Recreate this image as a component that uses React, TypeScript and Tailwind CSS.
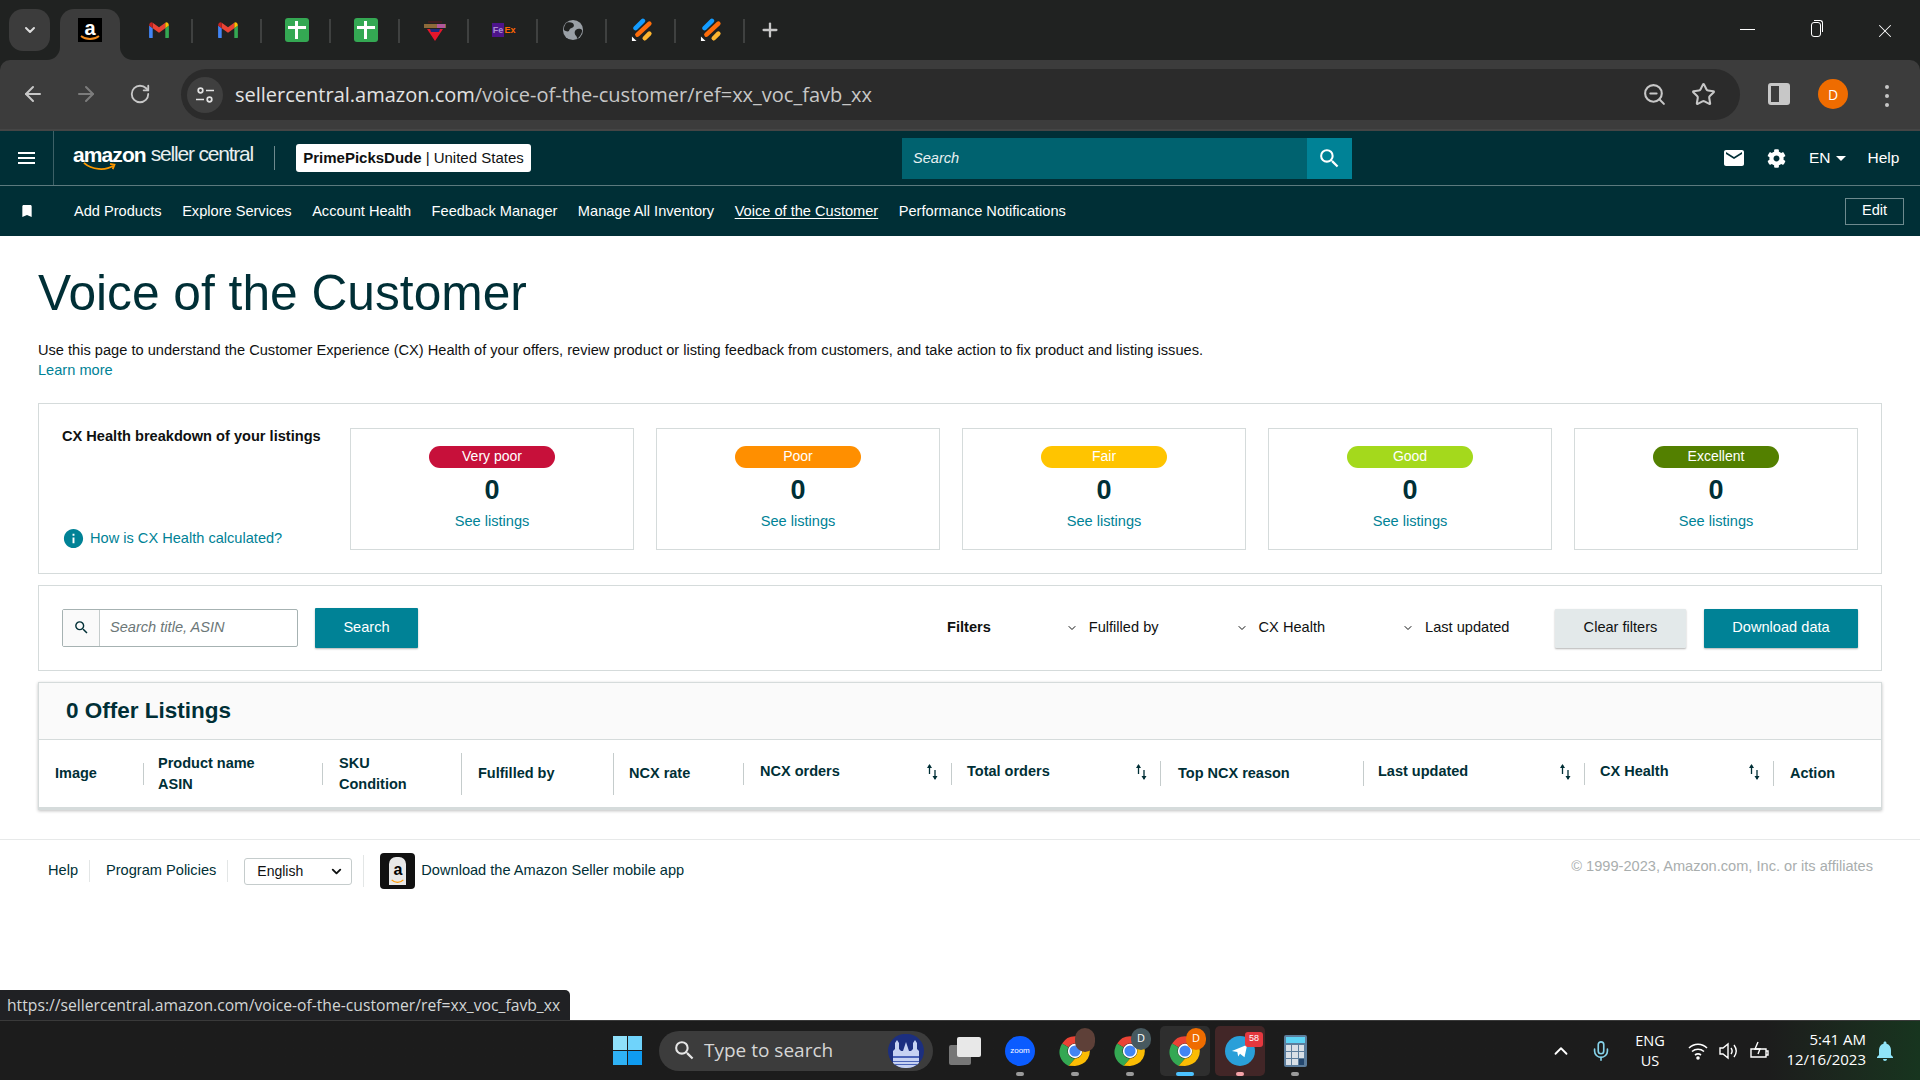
import React from "react";
import { ArrowLeft, ArrowRight, ChevronDown, ChevronUp, Mic, Plus, RotateCw, Star, X, ZoomOut } from "lucide-react";
import { FaCog } from "react-icons/fa";
import { MdBookmark, MdInfo, MdMail, MdNotifications, MdSearch } from "react-icons/md";

const Gmail = () => (
  <svg viewBox="0 0 24 20" className="w-[22px] h-[18px]">
    <path d="M1 5v13a1 1 0 0 0 1 1h3V8z" fill="#4285f4" />
    <path d="M23 5v13a1 1 0 0 1-1 1h-3V8z" fill="#34a853" />
    <path d="M5 8l7 5 7-5V2l-7 5-7-5z" fill="#ea4335" />
    <path d="M1 5c0-3 3-4.500 4-3v6z" fill="#c5221f" />
    <path d="M23 5c0-3-3-4.500-4-3v6z" fill="#fbbc04" />
  </svg>
);

const SheetIcon = () => (
  <div className="relative w-6 h-6 rounded-[3px] bg-[#34a853]">
    <div className="absolute left-[3px] right-[3px] top-[8px] h-[3px] bg-white" />
    <div className="absolute left-[10px] top-[3px] bottom-[3px] w-[3px] bg-white" />
  </div>
);

const AmazonFav = () => (
  <div className="relative w-6 h-6 bg-black flex justify-center">
    <span className="text-white font-bold text-[20px] leading-[20px] font-['Liberation_Sans',sans-serif]">a</span>
    <svg viewBox="0 0 24 24" className="absolute inset-0">
      <path d="M3 18c5 4 13 4 18 0" stroke="#f08a1d" strokeWidth="1.800" fill="none" />
    </svg>
  </div>
);

const Dart = () => (
  <svg viewBox="0 0 24 24" className="w-6 h-6">
    <path d="M5 4h14" stroke="#5b1621" strokeWidth="1" />
    <rect x="1" y="6" width="22" height="4" fill="#8d6a3a" />
    <rect x="14" y="6" width="8" height="4" fill="#b0579a" />
    <path d="M4 11h16l-8 12z" fill="#e5162c" />
    <path d="M7 11h10l-1 3H8z" fill="#1f2a7a" />
  </svg>
);

const Fedex = () => (
  <div className="flex w-6 h-[14px] text-[9px] font-bold leading-[14px] font-['Liberation_Sans',sans-serif]">
    <span className="bg-[#4d148c] text-[#a98fd0] w-[13px] text-center">Fe</span>
    <span className="text-[#ff6600]">Ex</span>
  </div>
);

const Globe = () => (
  <svg viewBox="0 0 24 24" className="w-[22px] h-[22px]">
    <circle cx="12" cy="12" r="11" fill="#9aa0a6" />
    <path d="M5 4c4-1 8 0 8 3s-4 2-5 5-4 1-6 0c0-3 1-6 3-8zM22 12c-2-2-5-2-7 0s-1 5 0 6 2 3 1 4c3-2 6-6 6-10z" fill="#202221" />
  </svg>
);

const Bars = () => (
  <svg viewBox="0 0 24 24" className="w-[22px] h-6">
    <path d="M1 24v-5l5 5z" fill="#fff" />
    <path d="M5 10L13 2" stroke="#139cff" strokeWidth="5" strokeLinecap="round" />
    <path d="M7 17L20 5" stroke="#ff6d0a" strokeWidth="5" strokeLinecap="round" />
    <path d="M15 21l5-5" stroke="#fdb62f" strokeWidth="5" strokeLinecap="round" />
  </svg>
);

const tabs = [<Gmail />, <Gmail />, <SheetIcon />, <SheetIcon />, <Dart />, <Fedex />, <Globe />, <Bars />, <Bars />];

const TabStrip = () => (
  <div className="flex h-[60px] shrink-0 bg-[#202221] pt-[9px]">
    <div className="ml-[9px] w-[41px] h-[42px] rounded-[14px] bg-[#3c3c3c] flex items-center justify-center">
      <ChevronDown size={16} strokeWidth={3} className="text-[#dddddd]" />
    </div>
    <div className="relative ml-[10px] w-[60px] h-[51px] bg-[#3c3c3c] rounded-t-[14px] flex justify-center pt-[9px]">
      <AmazonFav />
      {/* concave flares at the foot of the active tab */}
      <div className="absolute bottom-0 -left-[13px] w-[13px] h-[13px] bg-[#3c3c3c]">
        <div className="w-full h-full bg-[#202221] rounded-br-[13px]" />
      </div>
      <div className="absolute bottom-0 -right-[13px] w-[13px] h-[13px] bg-[#3c3c3c]">
        <div className="w-full h-full bg-[#202221] rounded-bl-[13px]" />
      </div>
    </div>
    {/* tab slots are 69px wide with a divider on the right edge */}
    <div className="ml-[4px] flex">
      {tabs.map((icon, i) => (
        <div key={i} className="w-[69px] h-[42px] relative flex items-center justify-center">
          {icon}
          <div className="absolute right-0 top-[10px] w-[2px] h-[24px] bg-[#3f4140]" />
        </div>
      ))}
    </div>
    <div className="w-[50px] h-[42px] flex items-center justify-center">
      <Plus size={22} strokeWidth={2.500} className="text-[#c7c7c7]" />
    </div>
    <div className="ml-auto flex h-[42px] items-start pt-[2px] text-white">
      <div className="w-[67px] flex justify-center pt-[18px]"><div className="w-[15px] h-px bg-white" /></div>
      <div className="w-[69px] flex justify-center pt-[11px]">
        <div className="relative w-[10px] h-[15px] border border-white rounded-[3px]">
          <div className="absolute -top-[3px] -right-[3px] w-[9px] h-[12px] border-t border-r border-white rounded-tr-[3px]" />
        </div>
      </div>
      <div className="w-[70px] flex justify-center pt-[9px]"><X size={22} strokeWidth={1.100} /></div>
    </div>
  </div>
);

const Toolbar = () => (
  <div className="h-[71px] shrink-0 bg-[#202221]">
    <div className="h-full bg-[#3c3c3c] rounded-t-[10px] border-b-2 border-[#454545] flex items-start pt-[9px] text-[#c7c7c7]">
      <ArrowLeft size={24} strokeWidth={2} className="ml-[21px] mt-[13px]" />
      <ArrowRight size={24} strokeWidth={2} className="ml-[29px] mt-[13px] text-[#7c7c7c]" />
      <RotateCw size={22} strokeWidth={2} className="ml-[31px] mt-[14px]" />
      <div className="ml-[30px] w-[1559px] h-[51px] rounded-full bg-[#2b2b2b] flex items-center pl-[6px] pr-[24px]">
        <div className="w-9 h-9 rounded-full bg-[#3f3f3f] flex items-center justify-center">
          <svg viewBox="0 0 20 20" className="w-5 h-5" fill="none" stroke="#e3e3e3" strokeWidth="1.700">
            <circle cx="5.500" cy="5.500" r="2.300" />
            <path d="M11 5.500h8M1 14.500h8" />
            <circle cx="14.500" cy="14.500" r="2.300" />
          </svg>
        </div>
        <div className="ml-[12px] text-[20px] leading-none text-[#e3e3e3] font-['Open_Sans',sans-serif]">
          sellercentral.amazon.com<span className="text-[#c7c7c7]">/voice-of-the-customer/ref=xx_voc_favb_xx</span>
        </div>
        <ZoomOut size={25} strokeWidth={2} className="ml-auto" />
        <Star size={25} strokeWidth={2} className="ml-[24px]" />
      </div>
      <div className="ml-[28px] mt-[14px] w-[22px] h-[22px] border-[3px] border-[#c7c7c7] rounded-[3px] flex justify-end">
        <div className="w-[8px] h-full bg-[#c7c7c7]" />
      </div>
      <div className="ml-[28px] mt-[10px] w-[30px] h-[30px] rounded-full bg-[#ef6c00] flex items-center justify-center text-white text-[14px] font-['Open_Sans',sans-serif]">
        D
      </div>
      <div className="ml-[37px] mt-[16px] flex flex-col gap-[5px]">
        <div className="w-1 h-1 rounded-full bg-[#c7c7c7]" />
        <div className="w-1 h-1 rounded-full bg-[#c7c7c7]" />
        <div className="w-1 h-1 rounded-full bg-[#c7c7c7]" />
      </div>
    </div>
  </div>
);

const AppHeader = () => (
  <div className="h-[55px] shrink-0 bg-[#002f36] border-b border-[#5c7a7e] flex items-center text-white">
    <div className="w-[54px] h-full border-r border-[#3d6167] flex items-center justify-center">
      <div className="flex flex-col gap-[3px]">
        <div className="w-[17px] h-[2px] bg-white" />
        <div className="w-[17px] h-[2px] bg-white" />
        <div className="w-[17px] h-[2px] bg-white" />
      </div>
    </div>
    <div className="ml-[19px] w-[181px] relative h-[34px] mt-[2px] flex items-start whitespace-nowrap">
      <span className="font-bold text-[21px] leading-[26px] tracking-[-0.9px]">amazon</span>
      <span className="ml-[5px] text-[21px] leading-[24px] tracking-[-1.2px] font-light text-[#e8eeee]">seller central</span>
      <svg viewBox="0 0 40 12" className="absolute left-[10px] top-[19px] w-[36px] h-[11px]">
        <path d="M1 2c9 8 24 9 33 3M30 3l5 1-2 5" fill="none" stroke="#f90" strokeWidth="2" />
      </svg>
    </div>
    <div className="ml-[20px] w-px h-[24px] bg-[#6e8a8e]" />
    <div className="ml-[21px] w-[235px] h-[28px] rounded-[3px] bg-white text-[#0f1111] text-[15px] flex items-center justify-center whitespace-nowrap">
      <span className="font-bold">PrimePicksDude</span>
      <span className="ml-[4px]">| United States</span>
    </div>
    <div className="ml-[371px] w-[450px] h-[41px] flex">
      <div className="flex-1 bg-[#00626f] pl-[11px] pt-[1px] flex items-center italic text-[14.600px] text-[#e8f0f1]">Search</div>
      <div className="w-[45px] bg-[#008296] flex items-center justify-center">
        <MdSearch size={25} />
      </div>
    </div>
    <MdMail size={24} className="ml-[370px]" />
    <FaCog size={19} className="ml-[21px]" />
    <span className="ml-[23px] text-[15.500px]">EN</span>
    <div className="ml-[5px] w-0 h-0 border-x-[5px] border-x-transparent border-t-[5px] border-t-white" />
    <span className="ml-[22px] text-[15.500px]">Help</span>
  </div>
);

const navItems = ["Add Products", "Explore Services", "Account Health", "Feedback Manager", "Manage All Inventory", "Voice of the Customer", "Performance Notifications"];

const NavBar = () => (
  <div className="h-[50px] shrink-0 bg-[#002f36] flex items-center text-white text-[14.600px] whitespace-nowrap">
    <MdBookmark size={16} className="ml-[19px]" />
    <div className="ml-[39px] pt-[1px] flex gap-[20.500px]">
      {navItems.map((item) => (
        <span key={item} className={item === "Voice of the Customer" ? "underline underline-offset-2" : ""}>
          {item}
        </span>
      ))}
    </div>
    <div className="ml-auto mr-[16px] w-[59px] h-[27px] border border-[#6e8a8e] flex items-center justify-center">Edit</div>
  </div>
);

const healthCards = [
  { label: "Very poor", color: "bg-[#c7103a]" },
  { label: "Poor", color: "bg-[#ff8f00]" },
  { label: "Fair", color: "bg-[#ffc400]" },
  { label: "Good", color: "bg-[#a4d91c]" },
  { label: "Excellent", color: "bg-[#538000]" },
];

const HealthCard = ({ label, color }: { label: string; color: string }) => (
  <div className="w-[284px] h-[122px] border border-[#d5dbdb] flex flex-col items-center pt-[17px]">
    <div className={`w-[126px] h-[22px] rounded-full ${color} text-white text-[14px] flex items-center justify-center`}>{label}</div>
    <div className="mt-[6px] text-[27px] leading-[32px] font-bold text-[#002f36]">0</div>
    <a className="mt-[5px] text-[#008296] text-[14.600px] leading-[20px]">See listings</a>
  </div>
);

const SortIcon = () => (
  <svg viewBox="0 0 14 18" className="w-[14px] h-[18px] shrink-0">
    <path d="M4.500 11V2" stroke="#002f36" strokeWidth="1.300" />
    <path d="M2 5l2.500-4L7 5z" fill="#002f36" />
    <path d="M10 7v9" stroke="#002f36" strokeWidth="1.300" />
    <path d="M7.500 13l2.500 4 2.500-4z" fill="#002f36" />
  </svg>
);

const columns = [
  { w: "w-[105px]", pl: "pl-[16px]", sep: "h-[22px]", lines: ["Image"] },
  { w: "w-[179px]", pl: "pl-[14px]", sep: "h-[22px]", lines: ["Product name", "ASIN"] },
  { w: "w-[139px]", pl: "pl-[16px]", sep: "h-[42px]", lines: ["SKU", "Condition"] },
  { w: "w-[152px]", pl: "pl-[16px]", sep: "h-[42px]", lines: ["Fulfilled by"] },
  { w: "w-[130px]", pl: "pl-[15px]", sep: "h-[22px]", lines: ["NCX rate"] },
  { w: "w-[208px]", pl: "pl-[16px]", sep: "h-[22px]", lines: ["NCX orders"], sort: true },
  { w: "w-[209px]", pl: "pl-[15px]", sep: "h-[25px]", lines: ["Total orders"], sort: true },
  { w: "w-[203px]", pl: "pl-[17px]", sep: "h-[25px]", lines: ["Top NCX reason"] },
  { w: "w-[221px]", pl: "pl-[14px]", sep: "h-[22px]", lines: ["Last updated"], sort: true },
  { w: "w-[189px]", pl: "pl-[15px]", sep: "h-[25px]", lines: ["CX Health"], sort: true },
  { w: "w-[108px]", pl: "pl-[16px]", sep: "", lines: ["Action"] },
];

const ListingsTable = () => (
  <div className="mt-[11px] border border-[#d5dbdb] border-b-[3px] shadow-[0_1px_3px_rgba(0,0,0,0.25)]">
    <div className="h-[57px] bg-[#fafafa] border-b border-[#d5dbdb] pl-[27px] flex items-center text-[22.500px] font-bold text-[#002f36]">
      0 Offer Listings
    </div>
    <div className="h-[67px] flex items-center text-[14.500px] leading-[21px] font-bold text-[#002f36]">
      {columns.map((col) => (
        <div key={col.lines[0]} className={`${col.w} flex items-center shrink-0`}>
          <div className={`flex-1 ${col.pl} flex items-center justify-between pr-[12px] ${col.sort ? "-mt-[4px]" : ""}`}>
            <div>
              {col.lines.map((line) => (
                <div key={line}>{line}</div>
              ))}
            </div>
            {col.sort ? <SortIcon /> : null}
          </div>
          {col.sep ? <div className={`w-px ${col.sep} bg-[#c5cccc]`} /> : null}
        </div>
      ))}
    </div>
  </div>
);

const FilterBar = () => (
  <div className="mt-[11px] h-[86px] border border-[#d5dbdb] flex items-center pl-[23px] pr-[23px] text-[14.600px] text-[#0f1111]">
    <div className="w-[236px] h-[38px] -mt-[1px] border border-[#a6b2b2] rounded-[2px] flex">
      <div className="w-[37px] border-r border-[#c5cccc] flex items-center justify-center bg-[#fafafa]">
        <MdSearch size={17} className="text-[#002f36]" />
      </div>
      <div className="pl-[10px] flex items-center italic text-[#6c7778]">Search title, ASIN</div>
    </div>
    <div className="ml-[17px] w-[103px] h-[40px] bg-[#008296] text-white rounded-[1px] shadow-[0_1px_2px_rgba(0,0,0,0.3)] flex items-center justify-center">Search</div>
    <span className="ml-[529px] font-bold">Filters</span>
    <ChevronDown size={12} strokeWidth={2} className="ml-[75px]" />
    <span className="ml-[11px]">Fulfilled by</span>
    <ChevronDown size={12} strokeWidth={2} className="ml-[77px]" />
    <span className="ml-[11px]">CX Health</span>
    <ChevronDown size={12} strokeWidth={2} className="ml-[77px]" />
    <span className="ml-[11px]">Last updated</span>
    <div className="ml-auto w-[131px] h-[39px] bg-[#e3e9ea] rounded-[1px] shadow-[0_1px_2px_rgba(0,0,0,0.3)] flex items-center justify-center">Clear filters</div>
    <div className="ml-[18px] w-[154px] h-[39px] bg-[#008296] text-white rounded-[1px] shadow-[0_1px_2px_rgba(0,0,0,0.3)] flex items-center justify-center">Download data</div>
  </div>
);

const Footer = () => (
  <div className="mt-[29px] border-t border-[#e7e9e9] h-[70px] flex items-start text-[14.600px] text-[#002f36]">
    <div className="ml-[48px] mt-[13px] flex items-center h-[36px]">
      <span>Help</span>
      <div className="ml-[11px] w-px h-[22px] bg-[#e3e6e6]" />
      <span className="ml-[16px]">Program Policies</span>
      <div className="ml-[11px] w-px h-[22px] bg-[#e3e6e6]" />
      <div className="ml-[16px] w-[108px] h-[27px] border border-[#c5cccc] rounded-[3px] flex items-center justify-between pl-[12px] pr-[7px] text-[14px] text-[#0f1111]">
        English
        <ChevronDown size={15} strokeWidth={3} />
      </div>
      <div className="ml-[11px] w-px h-[32px] bg-[#e3e6e6]" />
      <div className="relative ml-[16px] w-[35px] h-[36px] rounded-[4px] bg-[#111] flex justify-center pt-[4px]">
        <div className="w-[17px] h-[28px] bg-[#e8e8e8] rounded-t-[7px] text-[16px] leading-[26px] font-bold text-black text-center">a</div>
        <svg viewBox="0 0 16 6" className="absolute left-[10px] top-[26px] w-[15px] h-[5px]">
          <path d="M1 1c4 4 10 4 14 0" fill="none" stroke="#f90" strokeWidth="1.500" />
        </svg>
      </div>
      <span className="ml-[6px]">Download the Amazon Seller mobile app</span>
    </div>
    <span className="ml-auto mr-[47px] mt-[16px] text-[#a9aeae]">© 1999-2023, Amazon.com, Inc. or its affiliates</span>
  </div>
);

const ChromeIcon = ({ badge }: { badge?: React.ReactNode }) => (
  <div className="relative w-[34px] h-[34px]">
    <svg viewBox="0 0 32 32" className="w-full h-full">
      <path d="M16 2a14 14 0 0 1 12.100 7H16a7 7 0 0 0-6.100 3.500L3.900 9A14 14 0 0 1 16 2z" fill="#ea4335" />
      <path d="M3.900 9l6 3.500a7 7 0 0 0 6.100 10.500l-6 7A14 14 0 0 1 3.900 9z" fill="#34a853" />
      <path d="M28.100 9A14 14 0 0 1 16 30l-5.900-.200 6-6.800a7 7 0 0 0 5.900-10.500z" fill="#fbbc04" />
      <circle cx="16" cy="16" r="6" fill="#4285f4" stroke="#fff" strokeWidth="1.500" />
    </svg>
    {badge}
  </div>
);

const TaskSlot = ({ children, dot, bg }: { children: React.ReactNode; dot: string; bg?: string }) => (
  <div className={`relative w-[50px] h-[50px] mr-[5px] rounded-[5px] flex items-center justify-center ${bg ?? ""}`}>
    {children}
    <div className={`absolute bottom-0 left-1/2 -translate-x-1/2 h-[4px] rounded-full ${dot}`} />
  </div>
);

const Taskbar = () => (
  <div className="mt-auto h-[60px] shrink-0 border-t border-[#3a3a3a] bg-gradient-to-r from-[#1c1c1c] from-[92%] to-[#17351f] flex items-center text-white font-['Open_Sans',sans-serif]">
    <div className="ml-[613px] w-[29px] h-[29px] grid grid-cols-2 gap-px">
      <div className="bg-[#8fe0fa]" />
      <div className="bg-[#6fd3fb]" />
      <div className="bg-[#2fb2f5]" />
      <div className="bg-[#0f9bf0]" />
    </div>
    <div className="ml-[17px] w-[274px] h-[40px] rounded-full bg-[#3c3c3c] flex items-center pl-[13px] relative">
      <MdSearch size={25} className="text-[#e6e6e6]" />
      <span className="ml-[7px] text-[19px] text-[#d6d6d6]">Type to search</span>
      <div className="absolute right-[9px] top-[3px] w-[36px] h-[34px] rounded-full bg-[#1c2f80] flex items-end justify-center overflow-hidden">
        <svg viewBox="0 0 36 34" className="w-full h-full">
          <path d="M5 34V17l2-2V9l2-3 2 3v6l2 2h2l3-9 3 9h2l2-2V9l2-3 2 3v6l2 2v17z" fill="#c6d2f2" />
          <path d="M5 22h26v2H5zM5 27h26v1H5zM5 30h26v1H5z" fill="#4a63b8" />
        </svg>
      </div>
    </div>
    <div className="ml-[7px] flex items-center">
      <TaskSlot dot="w-0">
        <div className="relative w-[32px] h-[28px]">
          <div className="absolute left-0 bottom-0 w-[22px] h-[20px] bg-[#777] rounded-[2px]" />
          <div className="absolute right-0 top-0 w-[24px] h-[20px] bg-[#e8e8e8] rounded-[2px]" />
        </div>
      </TaskSlot>
      <TaskSlot dot="w-[8px] bg-[#9a9a9a]">
        <div className="w-[30px] h-[30px] rounded-full bg-[#0b5cff] flex items-center justify-center text-[8px] font-['Liberation_Sans',sans-serif]">zoom</div>
      </TaskSlot>
      <TaskSlot dot="w-[8px] bg-[#9a9a9a]">
        <ChromeIcon badge={<div className="absolute -right-[3px] -top-[6px] w-[20px] h-[24px] rounded-full bg-[#5e4038]" />} />
      </TaskSlot>
      <TaskSlot dot="w-[8px] bg-[#9a9a9a]">
        <ChromeIcon badge={<div className="absolute -right-[4px] -top-[6px] w-[20px] h-[22px] rounded-full bg-[#47595f] text-[11px] flex items-center justify-center">D</div>} />
      </TaskSlot>
      <TaskSlot dot="w-[18px] bg-[#4cc2ff]" bg="bg-[#2e2e2e]">
        <ChromeIcon badge={<div className="absolute -right-[4px] -top-[6px] w-[20px] h-[22px] rounded-full bg-[#ef6c00] text-[11px] flex items-center justify-center">D</div>} />
      </TaskSlot>
      <TaskSlot dot="w-[8px] bg-[#f5a3a8]" bg="bg-[#422627]">
        <div className="relative w-[30px] h-[30px] rounded-full bg-[#2a9fd9] flex items-center justify-center">
          <svg viewBox="0 0 20 20" className="w-[18px] h-[18px]"><path d="M1 10L18 3l-3 14-5-4-2 3-1-5z" fill="#fff" /></svg>
          <div className="absolute -right-[8px] -top-[4px] w-[18px] h-[15px] rounded-[3px] bg-[#e5383f] text-[9px] flex items-center justify-center font-['Liberation_Sans',sans-serif]">58</div>
        </div>
      </TaskSlot>
      <TaskSlot dot="w-[8px] bg-[#9a9a9a]">
        <div className="w-[23px] h-[32px] rounded-[2px] bg-[#5c7d9c] p-[2px] flex flex-col gap-[2px]">
          <div className="h-[6px] bg-[#5dd3f5]" />
          <div className="grid grid-cols-3 gap-px flex-1">
            {[0, 1, 2, 3, 4, 5, 6, 7, 8].map((n) => (
              <div key={n} className="bg-[#d8dfe6] last:bg-[#24476e]" />
            ))}
          </div>
        </div>
      </TaskSlot>
    </div>
    <div className="ml-auto flex items-center">
      <ChevronUp size={22} strokeWidth={2} />
      <Mic size={22} strokeWidth={1.800} className="ml-[18px] text-[#86d3ea]" />
      <div className="ml-[21px] w-[34px] text-center text-[14.500px] leading-[20px]">
        ENG
        <br />
        US
      </div>
      <svg viewBox="0 0 20 20" className="ml-[21px] w-5 h-5" fill="none" stroke="#fff" strokeWidth="1.600">
        <path d="M1 7c5-5 13-5 18 0M4 10.500c3.500-3 8.500-3 12 0M7 14c2-1.500 4-1.500 6 0" />
        <circle cx="10" cy="17" r="1" fill="#fff" />
      </svg>
      <svg viewBox="0 0 20 20" className="ml-[10px] w-5 h-5" fill="none" stroke="#fff" strokeWidth="1.400">
        <path d="M2 7h3l5-4v14l-5-4H2zM13 7c1.500 2 1.500 4 0 6M16 4c3 4 3 8 0 12" />
      </svg>
      <svg viewBox="0 0 20 20" className="ml-[11px] w-5 h-5" fill="none" stroke="#fff" strokeWidth="1.400">
        <path d="M2 8h15v8H2zM17 10h2v4h-2z" />
        <path d="M9 1L6 8h5l-2 5" />
      </svg>
      <div className="ml-[11px] -mt-[3px] w-[86px] text-right text-[15px] leading-[20px] whitespace-nowrap">
        5:41 AM
        <br />
        12/16/2023
      </div>
      <MdNotifications size={24} className="ml-[7px] mr-[23px] text-[#8fe3f7]" />
    </div>
  </div>
);

export default function App() {
  return (
    <div className="relative w-[1920px] h-[1080px] overflow-hidden flex flex-col bg-white font-['Liberation_Sans',Arial,sans-serif]">
      <TabStrip />
      <Toolbar />
      <AppHeader />
      <NavBar />
      <div className="px-[38px]">
        <h1 className="mt-[24px] text-[49.700px] leading-[66px] text-[#002f36] font-normal">Voice of the Customer</h1>
        <p className="mt-[14px] text-[14.620px] leading-[20px] text-[#0f1111]">
          Use this page to understand the Customer Experience (CX) Health of your offers, review product or listing feedback from customers, and take action to fix product and listing issues.
        </p>
        <a className="block text-[14.600px] leading-[21px] text-[#008296]">Learn more</a>
        <div className="mt-[22px] h-[171px] border border-[#d5dbdb] flex items-center pl-[23px] pr-[23px] justify-between">
          <div className="w-[264px] h-[123px] flex flex-col justify-between">
            <span className="-mt-[1px] text-[14.600px] font-bold leading-[20px] text-[#0f1111] whitespace-nowrap">CX Health breakdown of your listings</span>
            <div className="flex items-center gap-[5px] text-[14.600px] text-[#008296]">
              <MdInfo size={23} />
              How is CX Health calculated?
            </div>
          </div>
          <div className="flex gap-[22px]">
            {healthCards.map((c) => (
              <HealthCard key={c.label} label={c.label} color={c.color} />
            ))}
          </div>
        </div>
        <FilterBar />
        <ListingsTable />
      </div>
      <Footer />
      <Taskbar />
      {/* chrome's link preview bubble */}
      <div className="absolute left-0 top-[990px] w-[570px] h-[30px] bg-[#202124] rounded-tr-[5px] text-[#d3d6d6] text-[15.700px] leading-[30px] pl-[7px] whitespace-nowrap font-['Open_Sans',sans-serif]">
        https://sellercentral.amazon.com/voice-of-the-customer/ref=xx_voc_favb_xx
      </div>
    </div>
  );
}
